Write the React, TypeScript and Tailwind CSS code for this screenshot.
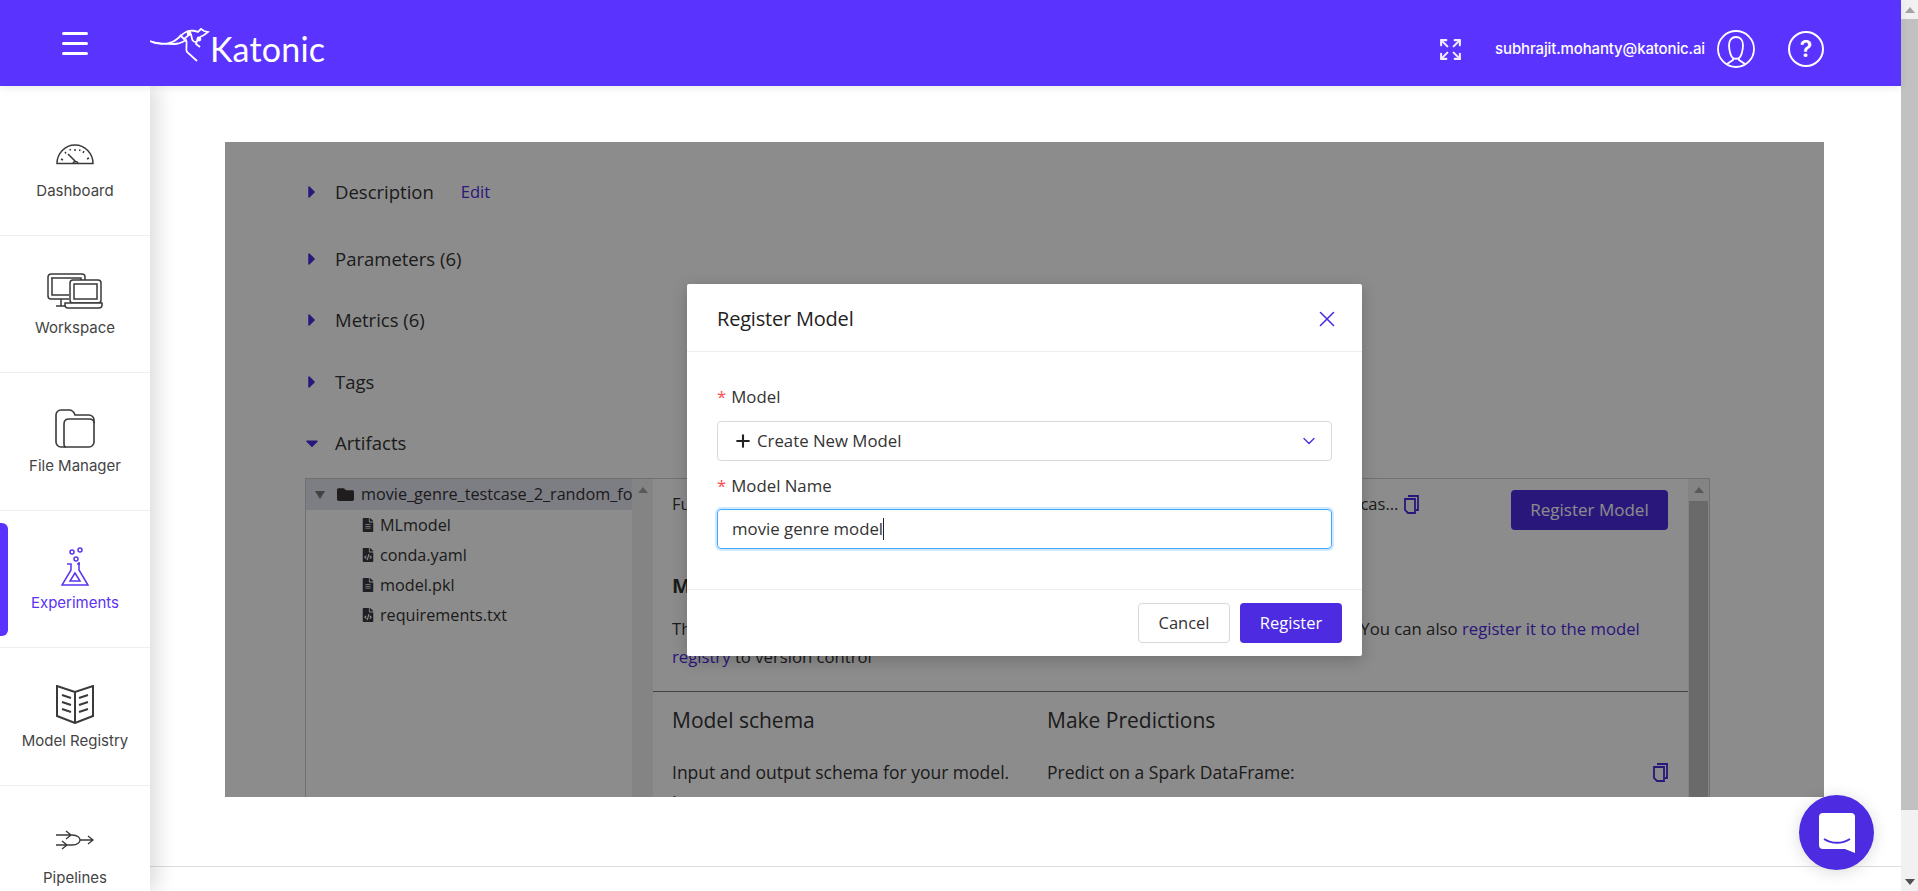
import * as React from 'react';
import { ChevronDown, Expand, Plus, X } from 'lucide-react';
import { FaCaretDown, FaCaretRight, FaFileAlt, FaFileCode, FaFolder } from 'react-icons/fa';

const DashboardIcon = () => (
  <svg width="38" height="21" viewBox="0 0 38 21" fill="none" stroke="#3a3a3a" strokeWidth="1.5">
    <path d="M1 19.5C1 9.5 9 1 19 1s18 8.500 18 18.500Z" />
    <path d="M12 10l8 8M17 19c1-2 4-2 5 0" strokeWidth="1.6" />
    <path d="M5 15l2 1M9 8l1 1.500M19 5v2M28 7l-1 2M33 14l-2 1M14 5l.5 1.500M24 5.500l-.5 1.500" />
  </svg>
);

const WorkspaceIcon = () => (
  <svg width="56" height="38" viewBox="0 0 56 38" fill="none" stroke="#3a3a3a" strokeWidth="1.5">
    <path d="M22 26H4a3 3 0 0 1-3-3V4a3 3 0 0 1 3-3h31a3 3 0 0 1 3 3v3" />
    <path d="M4 5h30v2M22 22H5V5" />
    <path d="M14 26v7M9 33h13" />
    <rect x="23" y="7" width="31" height="23" rx="3" fill="#fff" />
    <rect x="27" y="11" width="23" height="15" />
    <path d="M18 30h37v2a3 3 0 0 1-3 3H21a3 3 0 0 1-3-3Z" fill="#fff" />
  </svg>
);

const FolderIcon = () => (
  <svg width="40" height="40" viewBox="0 0 40 40" fill="none" stroke="#3a3a3a" strokeWidth="1.6">
    <path d="M11 38H6a5 5 0 0 1-5-5V6a5 5 0 0 1 5-5h8c3 0 5 2 6 5h14a5 5 0 0 1 5 5v22a5 5 0 0 1-5 5Z" />
    <path d="M11 38c-1 0-2-1-2-3V15c0-3 2-5 5-5h20c3 0 5 1 5 4" />
  </svg>
);

const FlaskIcon = () => (
  <svg width="28" height="40" viewBox="0 0 28 40" fill="none" stroke="#5b33f0" strokeWidth="1.5">
    <circle cx="11" cy="5" r="2" />
    <circle cx="19" cy="3" r="2" />
    <circle cx="15" cy="12" r="2" />
    <path d="M6 17h4v6L1 38h26l-9-15v-8M16 17h3" />
    <path d="M14 26l5 8H9Z" />
  </svg>
);

const BookIcon = () => (
  <svg width="40" height="39" viewBox="0 0 40 39" fill="none" stroke="#3a3a3a" strokeWidth="2">
    <path d="M20 7L2 1v30l18 7 18-7V1L20 7Zm0 0v31" />
    <path d="M7 10l9 3M7 17l9 3M7 24l9 3M33 10l-9 3M33 17l-9 3M33 24l-9 3" />
  </svg>
);

const PipelineIcon = () => (
  <svg width="38" height="22" viewBox="0 0 38 22" fill="none" stroke="#3a3a3a" strokeWidth="1.4" className="-mt-[4px]">
    <path d="M0 6h16c6 0 8 3 8 5s-2 5-8 5H0M24 11h13M32 7l5 4-5 4M10 2l5 4-5 4M6 12l5 4-5 4" />
  </svg>
);

const CopyIcon = () => (
  <svg width="15" height="19" viewBox="0 0 15 19" fill="none" stroke="#4d2be0" strokeWidth="1.800" className="shrink-0">
    <path d="M4 1h10v14h-2" />
    <path d="M1 4h10v14H4l-3-3Z" />
  </svg>
);

const navItems = [
  { label: 'Dashboard', icon: <DashboardIcon /> },
  { label: 'Workspace', icon: <WorkspaceIcon /> },
  { label: 'File Manager', icon: <FolderIcon /> },
  { label: 'Experiments', icon: <FlaskIcon />, active: true },
  { label: 'Model Registry', icon: <BookIcon /> },
  { label: 'Pipelines', icon: <PipelineIcon /> },
];

const Header = () => (
  <header className="relative z-20 flex h-[86px] shrink-0 items-center bg-[#5b33ff] pr-[77px] text-white shadow-[0_2px_8px_rgba(0,0,0,0.08)]">
    <div className="flex w-[150px] justify-center">
      <div className="flex w-[26px] flex-col gap-[7px]">
        <span className="h-[3px] rounded-sm bg-white" />
        <span className="h-[3px] rounded-sm bg-white" />
        <span className="h-[3px] rounded-sm bg-white" />
      </div>
    </div>
    <div className="flex items-end pt-[6px]">
      <svg width="62" height="38" viewBox="0 0 62 38" fill="none" stroke="#fff" strokeWidth="1.8" className="mb-[4px]">
        <path d="M0 16c6 3 14 4 22 1 6-2 10-9 16-11 3-1 8 0 10 1l3-3 3 2 4 1-4 3-4 2" />
        <path d="M2 17c8 2 16 2 22 2 4 0 9-2 12-4 2 4-1 9 1 12l10 9M41 9c1 5 1 8 5 8M48 13l-2 6 4 3M30 10l4 4 6-5" />
        <circle cx="39" cy="8" r="1.500" fill="#fff" />
        <circle cx="49" cy="14" r="1.500" fill="#fff" />
      </svg>
      <span className="-ml-[2px] font-['Lato',sans-serif] text-[34px] leading-[36px] font-normal tracking-[0.2px]">Katonic</span>
    </div>
    <div className="ml-auto flex items-center pt-[12px]">
      <Expand size={25} strokeWidth={2} className="text-[#f0edff]" />
      <span className="ml-[32px] font-['Inter',sans-serif] text-[15px] font-medium tracking-[-0.14px]">subhrajit.mohanty@katonic.ai</span>
      <svg width="38" height="38" viewBox="0 0 38 38" fill="none" stroke="#fff" strokeWidth="1.800" className="ml-[12px]">
        <circle cx="19" cy="19" r="18" />
        <path d="M12 15c0-5 3-8 7-8s7 3 7 8c0 6-2 12-4 13v2l6 4M12 15c0 6 2 12 4 13v2l-6 4M16 28c2 1 4 1 6 0" />
      </svg>
      <span className="relative ml-[33px] flex h-[36px] w-[36px] items-center justify-center rounded-full border-2 border-white font-['Inter',sans-serif] text-[23px] font-semibold">?</span>
    </div>
  </header>
);

const Sidebar = () => (
  <aside className="relative z-10 h-full w-[150px] shrink-0 overflow-hidden bg-white pt-[12px] shadow-[8px_0_18px_rgba(0,0,0,0.13)]">
    {navItems.map((item) => (
      <div
        key={item.label}
        className="relative flex h-[137.5px] flex-col items-center border-b border-[#eeeeee] pt-[34px]"
      >
        {item.active && <span className="absolute top-[12px] left-0 h-[113px] w-[8px] rounded-r-md bg-[#5b33ff]" />}
        <div className="flex h-[44px] items-center justify-center">{item.icon}</div>
        <span
          className={
            item.active
              ? "mt-[5.500px] font-['Inter',sans-serif] text-[15px] leading-[18px] text-[#5b33f0]"
              : "mt-[5.500px] font-['Inter',sans-serif] text-[15px] leading-[18px] text-[#444444]"
          }
        >
          {item.label}
        </span>
      </div>
    ))}
  </aside>
);

const Section = ({ label, open, className, children }: { label: string; open?: boolean; className?: string; children?: React.ReactNode }) => (
  <div className={`flex h-[61px] items-center ${className ?? ''}`}>
    <span className="-ml-[3px] flex w-[33px] text-[#4d2be0]">
      {open ? <FaCaretDown size={20} /> : <FaCaretRight size={20} />}
    </span>
    <span className="text-[18.500px] text-[#333333]">{label}</span>
    {children}
  </div>
);

const treeRows = [
  { name: 'MLmodel', icon: <FaFileAlt size={14} /> },
  { name: 'conda.yaml', icon: <FaFileCode size={14} /> },
  { name: 'model.pkl', icon: <FaFileAlt size={14} /> },
  { name: 'requirements.txt', icon: <FaFileCode size={14} /> },
];

const ScrollTrack = ({ className }: { className: string }) => (
  <div className={`flex shrink-0 flex-col items-center bg-[#f1f1f1] ${className}`}>
    <div className="flex h-[22px] shrink-0 items-center justify-center">
      <span className="h-0 w-0 border-x-[5px] border-b-[6px] border-x-transparent border-b-[#a3a3a3]" />
    </div>
  </div>
);

const ArtifactPanel = () => (
  <div className="flex min-h-0 flex-1 border-x border-t border-[#cccccc] text-[#333333]">
    <div className="w-[326px] shrink-0 overflow-hidden">
      <div className="flex h-[31px] items-center whitespace-nowrap bg-[#e4e4f0] pl-[9px] text-[16.200px]">
        <span className="mr-[12px] h-0 w-0 border-x-[5px] border-t-[8px] border-x-transparent border-t-[#777777]" />
        <FaFolder size={17} className="mr-[7px] shrink-0 text-[#3a3535]" />
        movie_genre_testcase_2_random_forest
      </div>
      {treeRows.map((row) => (
        <div key={row.name} className="flex h-[30px] items-center pl-[55px] text-[16.200px]">
          <span className="mr-[5px] text-[#3a3a42]">{row.icon}</span>
          {row.name}
        </div>
      ))}
    </div>
    <ScrollTrack className="w-[21px]" />
    <div className="flex min-w-0 flex-1 flex-col">
      <div className="border-b border-[#777777] pr-[20px] pl-[19px]">
        <div className="flex items-start justify-between pt-[11px]">
          <div className="flex items-center gap-[6px] pt-[2px] text-[16.500px]">
            <span className="whitespace-nowrap">Full Path:s3://models/experiments/14/8fd2c09e7ba44cc5f1a3c/artifacts/movie_genre_testcas...</span>
            <CopyIcon />
          </div>
          <button className="h-[40px] w-[157px] shrink-0 rounded-[4px] bg-[#4d2be0] text-[17px] text-white">Register Model</button>
        </div>
        <h3 className="mt-[42px] text-[20px] leading-[28px] font-bold">MLflow Model</h3>
        <p className="mt-[15px] h-[76px] text-[16.700px] leading-[28px]">
          The code snippets below demonstrate how to make predictions using the logged model. You can also{' '}
          <span className="text-[#4d2be0]">register it to the model registry</span> to version control
        </p>
      </div>
      <div className="flex pt-[14px] pr-[20px] pl-[19px]">
        <div className="w-[375px] shrink-0">
          <h4 className="text-[21px] leading-[28px]">Model schema</h4>
          <p className="mt-[23px] text-[17.500px] leading-[30px]">
            Input and output schema for your model.
            <br />
            Learn more
          </p>
        </div>
        <div className="flex-1">
          <h4 className="text-[21px] leading-[28px]">Make Predictions</h4>
          <div className="mt-[23px] flex items-center justify-between text-[17.500px] leading-[30px]">
            <span>Predict on a Spark DataFrame:</span>
            <CopyIcon />
          </div>
        </div>
      </div>
    </div>
    <div className="flex w-[21px] shrink-0 flex-col items-center bg-[#f1f1f1]">
      <div className="flex h-[22px] shrink-0 items-center justify-center">
        <span className="h-0 w-0 border-x-[5px] border-b-[6px] border-x-transparent border-b-[#a3a3a3]" />
      </div>
      <div className="w-[19px] flex-1 bg-[#c1c1c1]" />
    </div>
  </div>
);

const RegisterModal = () => (
  <div className="absolute top-[142px] left-[462px] flex h-[372px] w-[675px] flex-col rounded-[2px] bg-white text-[#333333] shadow-[0_4px_16px_rgba(0,0,0,0.2)]">
    <div className="flex h-[68px] shrink-0 items-center justify-between border-b border-[#eeeeee] pt-[3px] pr-[22px] pl-[30px]">
      <span className="text-[20px] font-medium tracking-[-0.2px] text-[#222222]">Register Model</span>
      <X size={26} strokeWidth={1.500} className="text-[#4d2be0]" />
    </div>
    <div className="flex-1 px-[30px] pt-[33px]">
      <label className="flex h-[24px] items-center text-[16.800px]">
        <span className="mr-[5px] text-[#ff4d4f]">*</span>Model
      </label>
      <div className="mt-[12px] flex h-[40px] items-center justify-between rounded-[4px] border border-[#d9d9d9] pr-[12px] pl-[15px] text-[16.800px]">
        <span className="flex items-center gap-[4px]">
          <Plus size={20} strokeWidth={2.500} className="text-[#222222]" />
          Create New Model
        </span>
        <ChevronDown size={20} strokeWidth={1.600} className="text-[#4d2be0]" />
      </div>
      <label className="mt-[13px] flex h-[24px] items-center text-[16.800px]">
        <span className="mr-[5px] text-[#ff4d4f]">*</span>Model Name
      </label>
      <div className="mt-[11px] flex h-[40px] items-center rounded-[4px] border border-[#40a9ff] pl-[14px] text-[16.800px] shadow-[0_0_0_2px_rgba(24,144,255,0.2)]">
        movie genre model
        <span className="h-[22px] w-px bg-[#222222]" />
      </div>
    </div>
    <div className="flex h-[67px] shrink-0 items-center justify-end gap-[10px] border-t border-[#eeeeee] pr-[20px]">
      <button className="h-[40px] w-[92px] rounded-[4px] border border-[#d9d9d9] bg-white text-[16.500px]">Cancel</button>
      <button className="h-[40px] w-[102px] rounded-[4px] bg-[#4d2be0] text-[16.500px] text-white">Register</button>
    </div>
  </div>
);

const Scrollbar = () => (
  <div className="flex w-[17px] shrink-0 flex-col bg-[#f1f1f1]">
    <div className="flex h-[19px] items-center justify-center">
      <span className="h-0 w-0 border-x-[5px] border-b-[6px] border-x-transparent border-b-[#a3a3a3]" />
    </div>
    <div className="h-[791px] bg-[#c1c1c1]" />
    <div className="mt-auto flex h-[19px] items-center justify-center">
      <span className="h-0 w-0 border-x-[5px] border-t-[6px] border-x-transparent border-t-[#505050]" />
    </div>
  </div>
);

export default function App() {
  return (
    <div className="flex h-[891px] w-[1918px] overflow-hidden bg-white font-['Open_Sans',sans-serif]">
      <div className="relative flex min-w-0 flex-1 flex-col">
        <Header />
        <div className="flex min-h-0 flex-1">
          <Sidebar />
          <main className="flex min-w-0 flex-1 flex-col pt-[56px]">
            <div className="relative mr-[77px] ml-[75px] flex h-[655px] shrink-0 flex-col overflow-hidden bg-white pt-[19px] pr-[114px] pl-[80px]">
              <Section label="Description" className="mb-[6px]">
                <span className="mt-[1px] ml-[27px] text-[16.500px] text-[#4d2be0]">Edit</span>
              </Section>
              <Section label="Parameters (6)" />
              <Section label="Metrics (6)" className="mb-[1px]" />
              <Section label="Tags" />
              <Section label="Artifacts" open className="mb-[5px]" />
              <ArtifactPanel />
              <div className="absolute inset-0 bg-black/45" />
              <RegisterModal />
            </div>
            <div className="mt-[69px] border-t border-[#dddddd]" />
          </main>
        </div>
        <button className="absolute top-[795px] right-[27px] z-30 flex h-[75px] w-[75px] items-center justify-center rounded-full bg-[#4d2be0] shadow-[0_2px_16px_rgba(0,0,0,0.15)]">
          <svg width="36" height="41" viewBox="0 0 36 41" fill="none">
            <path d="M4 1h28a4 4 0 0 1 4 4v36l-10-4H4a4 4 0 0 1-4-4V5a4 4 0 0 1 4-4Z" fill="#fff" />
            <path d="M5 27c8 5 18 5 26 0" stroke="#4d2be0" strokeWidth="2" />
          </svg>
        </button>
      </div>
      <Scrollbar />
    </div>
  );
}
